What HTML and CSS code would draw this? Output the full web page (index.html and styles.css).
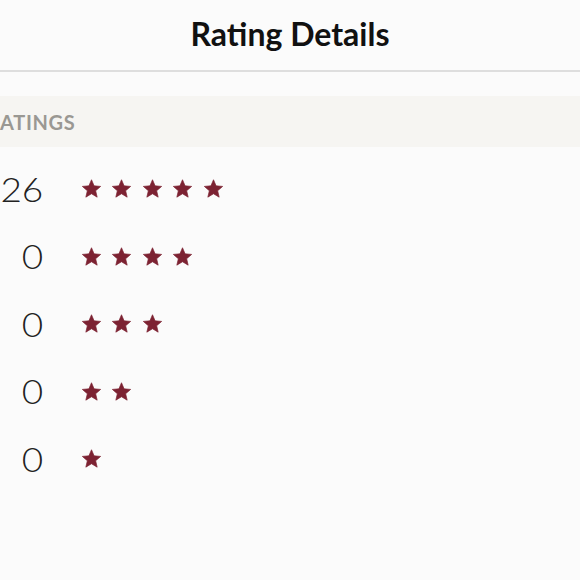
FILE: index.html
```html
<!DOCTYPE html>
<html>
<head>
<meta charset="utf-8">
<link rel="stylesheet" href="styles.css">
</head>
<body>
<header class="topbar"><h1 class="title">Rating Details</h1></header>
<section class="ratings">
  <div class="section-head"><span class="section-label">ATINGS</span></div>
  <div class="rows">
    <div class="row"><span class="count"><span class="num">26</span></span><span class="stars"><svg class="star" viewBox="0 0 24 24"><use href="#s"/></svg><svg class="star" viewBox="0 0 24 24"><use href="#s"/></svg><svg class="star" viewBox="0 0 24 24"><use href="#s"/></svg><svg class="star" viewBox="0 0 24 24"><use href="#s"/></svg><svg class="star" viewBox="0 0 24 24"><use href="#s"/></svg></span></div>
    <div class="row"><span class="count"><span class="num">0</span></span><span class="stars"><svg class="star" viewBox="0 0 24 24"><use href="#s"/></svg><svg class="star" viewBox="0 0 24 24"><use href="#s"/></svg><svg class="star" viewBox="0 0 24 24"><use href="#s"/></svg><svg class="star" viewBox="0 0 24 24"><use href="#s"/></svg></span></div>
    <div class="row"><span class="count"><span class="num">0</span></span><span class="stars"><svg class="star" viewBox="0 0 24 24"><use href="#s"/></svg><svg class="star" viewBox="0 0 24 24"><use href="#s"/></svg><svg class="star" viewBox="0 0 24 24"><use href="#s"/></svg></span></div>
    <div class="row"><span class="count"><span class="num">0</span></span><span class="stars"><svg class="star" viewBox="0 0 24 24"><use href="#s"/></svg><svg class="star" viewBox="0 0 24 24"><use href="#s"/></svg></span></div>
    <div class="row"><span class="count"><span class="num">0</span></span><span class="stars"><svg class="star" viewBox="0 0 24 24"><use href="#s"/></svg></span></div>
  </div>
</section>
<svg class="defs" width="0" height="0"><defs><path id="s" d="M12 2L14.94 8.95 22.46 9.6 16.76 14.55 18.47 21.9 12 18 5.53 21.9 7.24 14.55 1.54 9.6 9.06 8.95Z" stroke="#7c2232" stroke-width="0.8" stroke-linejoin="round"/></defs></svg>
</body>
</html>
```
FILE: styles.css
```css
html, body { margin: 0; padding: 0; }
body {
  background: #fbfbfb;
  font-family: Lato, "Open Sans", sans-serif;
  width: 580px;
  height: 580px;
  overflow: hidden;
}
.topbar {
  height: 70px;
  border-bottom: 2px solid #dedede;
  display: flex;
  align-items: center;
  justify-content: center;
}
.title {
  margin: 0;
  font-size: 32px;
  font-weight: 700;
  color: #111;
  padding-bottom: 4px;
}
.ratings { padding-top: 24px; }
.section-head {
  height: 51px;
  background: #f6f5f2;
  display: flex;
  align-items: center;
}
.section-label {
  font-size: 20px;
  font-weight: 700;
  letter-spacing: 0.7px;
  color: #9a9893;
}
.rows { padding-top: 8px; }
.row {
  height: 67.5px;
  display: flex;
  align-items: center;
}
.count {
  width: 43px;
  text-align: right;
  font-size: 33px;
  font-weight: 300;
  color: #222;
  white-space: nowrap;
}
.num {
  display: inline-block;
  transform: scaleX(1.12);
  transform-origin: right center;
}
.stars {
  margin-left: 37.5px;
  display: flex;
  gap: 9.5px;
}
.star {
  width: 21px;
  height: 21px;
  fill: #7c2232;
}
.defs { position: absolute; }
```
